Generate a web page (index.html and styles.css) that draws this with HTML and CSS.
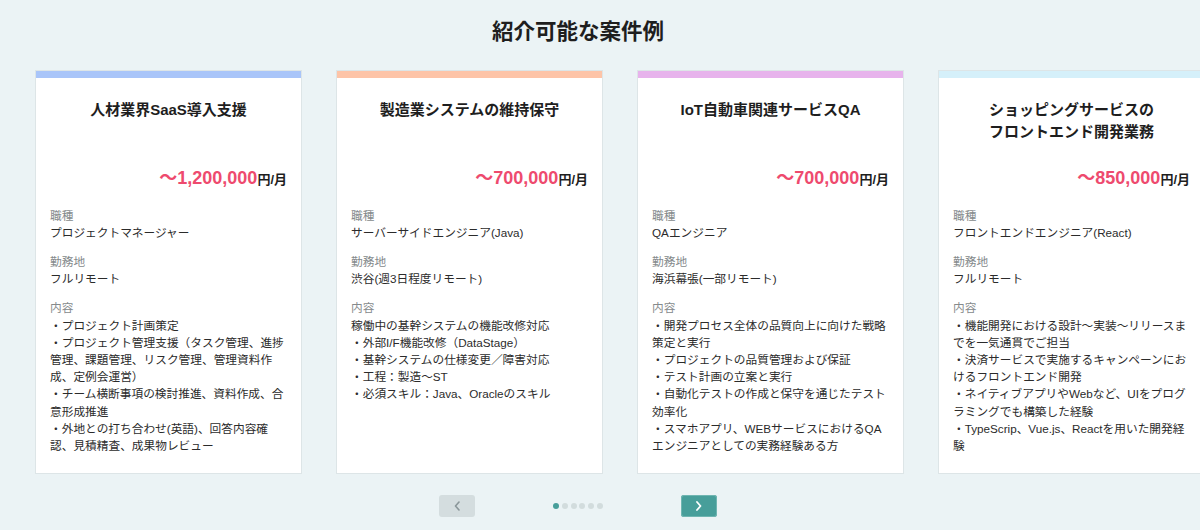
FILE: index.html
```html
<!DOCTYPE html>
<html lang="ja">
<head>
<meta charset="utf-8">
<title>紹介可能な案件例</title>
<link rel="stylesheet" href="styles.css">
</head>
<body>
<main class="section">
  <h2 class="section-title">紹介可能な案件例</h2>
  <div class="carousel">
    <div class="track">
      <article class="card card--blue">
        <div class="card-bar"></div>
        <div class="card-body">
          <h3 class="card-title">人材業界SaaS導入支援</h3>
          <p class="price"><span class="amount">〜1,200,000</span><span class="unit">円/月</span></p>
          <dl class="specs">
            <div class="spec"><dt>職種</dt><dd>プロジェクトマネージャー</dd></div>
            <div class="spec"><dt>勤務地</dt><dd>フルリモート</dd></div>
            <div class="spec"><dt>内容</dt><dd>・プロジェクト計画策定<br>・プロジェクト管理支援（タスク管理、進捗管理、課題管理、リスク管理、管理資料作成、定例会運営）<br>・チーム横断事項の検討推進、資料作成、合意形成推進<br>・外地との打ち合わせ(英語)、回答内容確認、見積精査、成果物レビュー</dd></div>
          </dl>
        </div>
      </article>
      <article class="card card--peach">
        <div class="card-bar"></div>
        <div class="card-body">
          <h3 class="card-title">製造業システムの維持保守</h3>
          <p class="price"><span class="amount">〜700,000</span><span class="unit">円/月</span></p>
          <dl class="specs">
            <div class="spec"><dt>職種</dt><dd>サーバーサイドエンジニア(Java)</dd></div>
            <div class="spec"><dt>勤務地</dt><dd>渋谷(週3日程度リモート)</dd></div>
            <div class="spec"><dt>内容</dt><dd>稼働中の基幹システムの機能改修対応<br>・外部I/F機能改修（DataStage）<br>・基幹システムの仕様変更／障害対応<br>・工程：製造〜ST<br>・必須スキル：Java、Oracleのスキル</dd></div>
          </dl>
        </div>
      </article>
      <article class="card card--lavender">
        <div class="card-bar"></div>
        <div class="card-body">
          <h3 class="card-title">IoT自動車関連サービスQA</h3>
          <p class="price"><span class="amount">〜700,000</span><span class="unit">円/月</span></p>
          <dl class="specs">
            <div class="spec"><dt>職種</dt><dd>QAエンジニア</dd></div>
            <div class="spec"><dt>勤務地</dt><dd>海浜幕張(一部リモート)</dd></div>
            <div class="spec"><dt>内容</dt><dd>・開発プロセス全体の品質向上に向けた戦略策定と実行<br>・プロジェクトの品質管理および保証<br>・テスト計画の立案と実行<br>・自動化テストの作成と保守を通じたテスト効率化<br>・スマホアプリ、WEBサービスにおけるQAエンジニアとしての実務経験ある方</dd></div>
          </dl>
        </div>
      </article>
      <article class="card card--cyan">
        <div class="card-bar"></div>
        <div class="card-body">
          <h3 class="card-title">ショッピングサービスの<br>フロントエンド開発業務</h3>
          <p class="price"><span class="amount">〜850,000</span><span class="unit">円/月</span></p>
          <dl class="specs">
            <div class="spec"><dt>職種</dt><dd>フロントエンドエンジニア(React)</dd></div>
            <div class="spec"><dt>勤務地</dt><dd>フルリモート</dd></div>
            <div class="spec"><dt>内容</dt><dd>・機能開発における設計〜実装〜リリースまでを一気通貫でご担当<br>・決済サービスで実施するキャンペーンにおけるフロントエンド開発<br>・ネイティブアプリやWebなど、UIをプログラミングでも構築した経験<br>・TypeScrip、Vue.js、Reactを用いた開発経験</dd></div>
          </dl>
        </div>
      </article>
    </div>
  </div>
  <nav class="pager">
    <button class="pager-btn pager-btn--prev" aria-label="前へ">
      <svg width="7" height="10" viewBox="0 0 7 10"><polyline points="5,1 1.5,5 5,9" fill="none" stroke="currentColor" stroke-width="1.6" stroke-linecap="round" stroke-linejoin="round"/></svg>
    </button>
    <div class="dots">
      <span class="dot dot--active"></span>
      <span class="dot"></span>
      <span class="dot"></span>
      <span class="dot"></span>
      <span class="dot"></span>
      <span class="dot"></span>
    </div>
    <button class="pager-btn pager-btn--next" aria-label="次へ">
      <svg width="7" height="10" viewBox="0 0 7 10"><polyline points="2,1 5.5,5 2,9" fill="none" stroke="currentColor" stroke-width="1.8" stroke-linecap="round" stroke-linejoin="round"/></svg>
    </button>
  </nav>
</main>
</body>
</html>
```
FILE: styles.css
```css
* { box-sizing: border-box; }

html, body {
  margin: 0;
  padding: 0;
}

body {
  width: 1200px;
  height: 530px;
  overflow: hidden;
  background: #ebf3f5;
  font-family: "Liberation Sans", "Noto Sans CJK JP", sans-serif;
  color: #222;
}

.section {
  width: 1156px;
}

.section-title {
  margin: 0;
  padding-top: 17px;
  font-size: 21.5px;
  line-height: 30px;
  font-weight: 700;
  text-align: center;
  color: #1e1e1e;
}

.carousel {
  margin-top: 23px;
  padding-left: 35px;
}

.track {
  display: flex;
  gap: 34px;
  align-items: stretch;
}

.card {
  flex: 0 0 267px;
  background: #fff;
  border: 1px solid #dde5e7;
  display: flex;
  flex-direction: column;
}

.card-bar {
  height: 7px;
}

.card--blue .card-bar { background: #a9c5f9; }
.card--peach .card-bar { background: #fdc4a8; }
.card--lavender .card-bar { background: #e7b3ec; }
.card--cyan .card-bar { background: #d5f0fa; }

.card-body {
  padding: 21px 14px 19px;
}

.card-title {
  margin: 0;
  font-size: 15px;
  line-height: 21.75px;
  min-height: 43.5px;
  font-weight: 700;
  text-align: center;
  color: #1e1e1e;
}

.price {
  margin: 23px 0 0;
  line-height: 24px;
  text-align: right;
  font-weight: 700;
}

.amount {
  font-size: 18px;
  color: #ee4a6e;
}

.unit {
  font-size: 13px;
  color: #1e1e1e;
}

.specs {
  margin: 15px 0 0;
  font-size: 11.7px;
  line-height: 17.2px;
}

.spec + .spec {
  margin-top: 12px;
}

.spec dt {
  color: #858a8c;
}

.spec dd {
  margin: 0;
  color: #2b2b2b;
}

.pager {
  margin-top: 21px;
  display: flex;
  justify-content: center;
  align-items: center;
  gap: 78px;
}

.pager-btn {
  width: 36px;
  height: 22px;
  border: none;
  border-radius: 3px;
  padding: 0;
  display: flex;
  align-items: center;
  justify-content: center;
}

.pager-btn--prev {
  background: #d4dddf;
  color: #8a9699;
}

.pager-btn--next {
  background: #479e9a;
  color: #fff;
  box-shadow: 0 0 0 1px #6fb5b1 inset;
}

.dots {
  display: flex;
  gap: 2.7px;
}

.dot {
  width: 6px;
  height: 6px;
  border-radius: 50%;
  background: #d2dcdd;
}

.dot--active {
  background: #479e9a;
}
```
